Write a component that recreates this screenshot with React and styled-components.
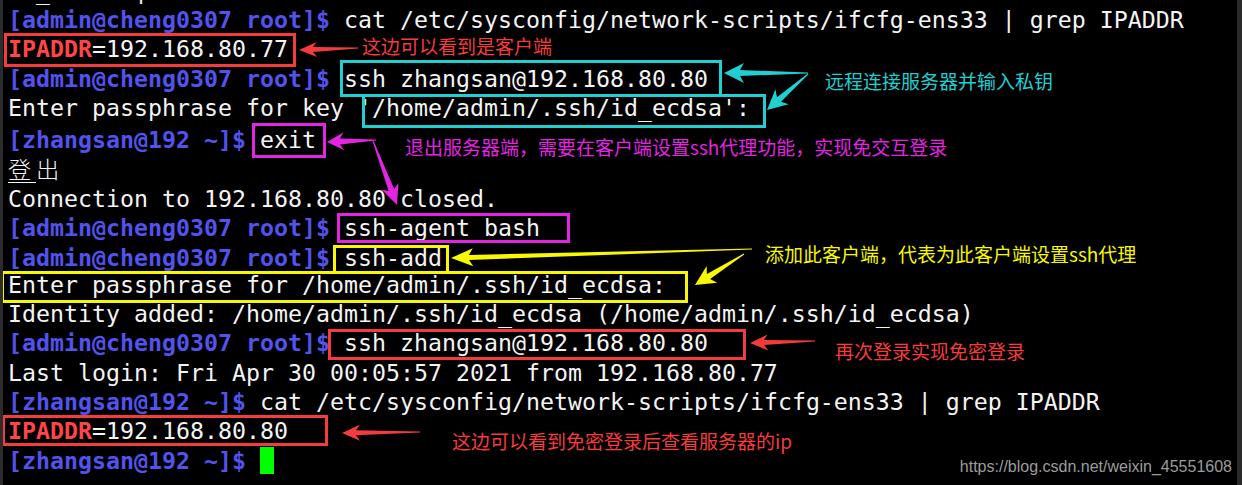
import React from 'react';
import styled, { createGlobalStyle } from 'styled-components';

const GlobalStyle = createGlobalStyle`
  html, body {
    margin: 0;
    padding: 0;
    background: #000;
  }
`;

const Screen = styled.div`
  position: relative;
  width: 1242px;
  height: 485px;
  box-sizing: border-box;
  background: #000;
  border-left: 3px solid #2c2c2c;
  border-right: 5px solid #2a2a2a;
  overflow: hidden;
`;

const Lines = styled.div`
  margin-top: -24.5px;
  padding-left: 5px;
  font-family: 'DejaVu Sans Mono', monospace;
  font-size: 23.25px;
  line-height: 29.4px;
  color: #f4f4f4;
  white-space: pre;
`;

const Line = styled.div`
  height: ${(p) => 29.4 + (p.$extra || 0)}px;
  padding-top: ${(p) => Math.max(p.$extra || 0, 0)}px;
  box-sizing: border-box;
`;

const Prompt = styled.span`
  color: #5252ec;
  font-weight: bold;
`;

const Key = styled.span`
  color: #ff4646;
  font-weight: bold;
`;

const Wide = styled.span`
  font-family: 'Noto Sans CJK SC', sans-serif;
  font-weight: 300;
  letter-spacing: 4.75px;
`;

const Underlined = styled.span`
  text-decoration: underline;
  text-underline-offset: 4px;
  text-decoration-thickness: 1px;
`;

const Cursor = styled.span`
  display: inline-block;
  vertical-align: top;
  margin-top: 1px;
  width: 14px;
  height: 27px;
  background: #00ff00;
`;

const Box = styled.div`
  position: absolute;
  left: ${(p) => p.$x}px;
  top: ${(p) => p.$y}px;
  width: ${(p) => p.$w}px;
  height: ${(p) => p.$h}px;
  box-sizing: border-box;
  border: 3px solid ${(p) => p.$color};
`;

const Note = styled.div`
  position: absolute;
  left: ${(p) => p.$x}px;
  top: ${(p) => p.$y}px;
  font-family: 'Noto Sans CJK SC', sans-serif;
  font-size: 19px;
  line-height: 19px;
  color: ${(p) => p.$color};
  white-space: nowrap;
`;

const Watermark = styled.div`
  position: absolute;
  right: 5px;
  bottom: 9px;
  font-family: 'Liberation Sans', Arial, sans-serif;
  font-size: 16px;
  color: #9c9c9c;
`;

const Overlay = styled.svg`
  position: absolute;
  left: -3px;
  top: 0;
  pointer-events: none;
`;

const RED = '#f43c3c';
const CYAN = '#1fcfd2';
const PINK = '#e324e3';
const YELLOW = '#f8f800';

const ADMIN = '[admin@cheng0307 root]$';
const ZS = '[zhangsan@192 ~]$';
const CAT = ' cat /etc/sysconfig/network-scripts/ifcfg-ens33 | grep IPADDR';

// offsets are page coords; the screen has a 3px left border
const boxes = [
  { x: 1, y: 33, w: 292, h: 34, color: RED },
  { x: 337, y: 60, w: 382, h: 37, color: CYAN },
  { x: 359, y: 94, w: 404, h: 34, color: CYAN },
  { x: 249, y: 123, w: 74, h: 35, color: PINK },
  { x: 334, y: 213, w: 233, h: 30, color: PINK },
  { x: 330, y: 245, w: 116, h: 29, color: YELLOW },
  { x: -2, y: 271, w: 687, h: 32, color: YELLOW },
  { x: 325, y: 329, w: 418, h: 31, color: RED },
  { x: -1, y: 415, w: 326, h: 31, color: RED },
];

const notes = [
  { x: 359, y: 36, color: RED, text: '这边可以看到是客户端' },
  { x: 822, y: 71, color: CYAN, text: '远程连接服务器并输入私钥' },
  { x: 402, y: 137, color: PINK, text: '退出服务器端，需要在客户端设置ssh代理功能，实现免交互登录' },
  { x: 762, y: 244, color: YELLOW, text: '添加此客户端，代表为此客户端设置ssh代理' },
  { x: 832, y: 341, color: RED, text: '再次登录实现免密登录' },
  { x: 449, y: 431, color: RED, text: '这边可以看到免密登录后查看服务器的ip' },
];

const arrows = [
  { from: [358, 48], to: [299, 50], color: RED, head: 18, hw: 15, sw: 5 },
  { from: [808, 73], to: [724, 73], color: CYAN, head: 20, hw: 20, sw: 6 },
  { from: [808, 74], to: [767, 110], color: CYAN, head: 20, hw: 20, sw: 6 },
  { from: [376, 140], to: [327, 142], color: PINK, head: 17, hw: 18, sw: 6 },
  { from: [373, 141], to: [397, 205], color: PINK, head: 20, hw: 18, sw: 6 },
  { from: [752, 249], to: [451, 258], color: YELLOW, head: 22, hw: 18, sw: 5 },
  { from: [744, 254], to: [695, 285], color: YELLOW, head: 20, hw: 20, sw: 6 },
  { from: [815, 341], to: [750, 343], color: RED, head: 18, hw: 16, sw: 5 },
  { from: [420, 432], to: [342, 433], color: RED, head: 18, hw: 16, sw: 5 },
];

function arrowPoints({ from, to, head, hw, sw }) {
  const [x1, y1] = from;
  const [x2, y2] = to;
  const len = Math.hypot(x2 - x1, y2 - y1);
  const ux = (x2 - x1) / len;
  const uy = (y2 - y1) / len;
  const nx = -uy;
  const ny = ux;
  const bx = x2 - ux * head;
  const by = y2 - uy * head;
  const pts = [
    [x1 + nx * 0.5, y1 + ny * 0.5],
    [bx + ux * 4 + nx * (sw / 2), by + uy * 4 + ny * (sw / 2)],
    [bx + nx * (hw / 2), by + ny * (hw / 2)],
    [x2, y2],
    [bx - nx * (hw / 2), by - ny * (hw / 2)],
    [bx + ux * 4 - nx * (sw / 2), by + uy * 4 - ny * (sw / 2)],
    [x1 - nx * 0.5, y1 - ny * 0.5],
  ];
  return pts.map((p) => p.map((v) => v.toFixed(1)).join(',')).join(' ');
}

export default function App() {
  return (
    <>
      <GlobalStyle />
      <Screen>
        <Lines>
          <Line>{'  _      |'}</Line>
          <Line><Prompt>{ADMIN}</Prompt>{CAT}</Line>
          <Line><Key>IPADDR</Key>=192.168.80.77</Line>
          <Line><Prompt>{ADMIN}</Prompt>{' ssh zhangsan@192.168.80.80'}</Line>
          <Line>Enter passphrase for key '/home/admin/.ssh/id_ecdsa':</Line>
          <Line $extra={2.5}><Prompt>{ZS}</Prompt>{' exit'}</Line>
          <Line><Wide><Underlined>登</Underlined>出</Wide></Line>
          <Line>Connection to 192.168.80.80 closed.</Line>
          <Line><Prompt>{ADMIN}</Prompt>{' ssh-agent bash'}</Line>
          <Line $extra={-1.5}><Prompt>{ADMIN}</Prompt>{' ssh-add'}</Line>
          <Line $extra={-1}>Enter passphrase for /home/admin/.ssh/id_ecdsa:</Line>
          <Line>Identity added: /home/admin/.ssh/id_ecdsa (/home/admin/.ssh/id_ecdsa)</Line>
          <Line><Prompt>{ADMIN}</Prompt>{' ssh zhangsan@192.168.80.80'}</Line>
          <Line>Last login: Fri Apr 30 00:05:57 2021 from 192.168.80.77</Line>
          <Line><Prompt>{ZS}</Prompt>{CAT}</Line>
          <Line><Key>IPADDR</Key>=192.168.80.80</Line>
          <Line><Prompt>{ZS}</Prompt>{' '}<Cursor /></Line>
        </Lines>

        {boxes.map((b, i) => (
          <Box key={i} $x={b.x} $y={b.y} $w={b.w} $h={b.h} $color={b.color} />
        ))}

        <Overlay width="1242" height="485" viewBox="0 0 1242 485">
          {arrows.map((a, i) => (
            <polygon key={i} points={arrowPoints(a)} fill={a.color} />
          ))}
        </Overlay>

        {notes.map((n, i) => (
          <Note key={i} $x={n.x} $y={n.y} $color={n.color}>{n.text}</Note>
        ))}

        <Watermark>https://blog.csdn.net/weixin_45551608</Watermark>
      </Screen>
    </>
  );
}
